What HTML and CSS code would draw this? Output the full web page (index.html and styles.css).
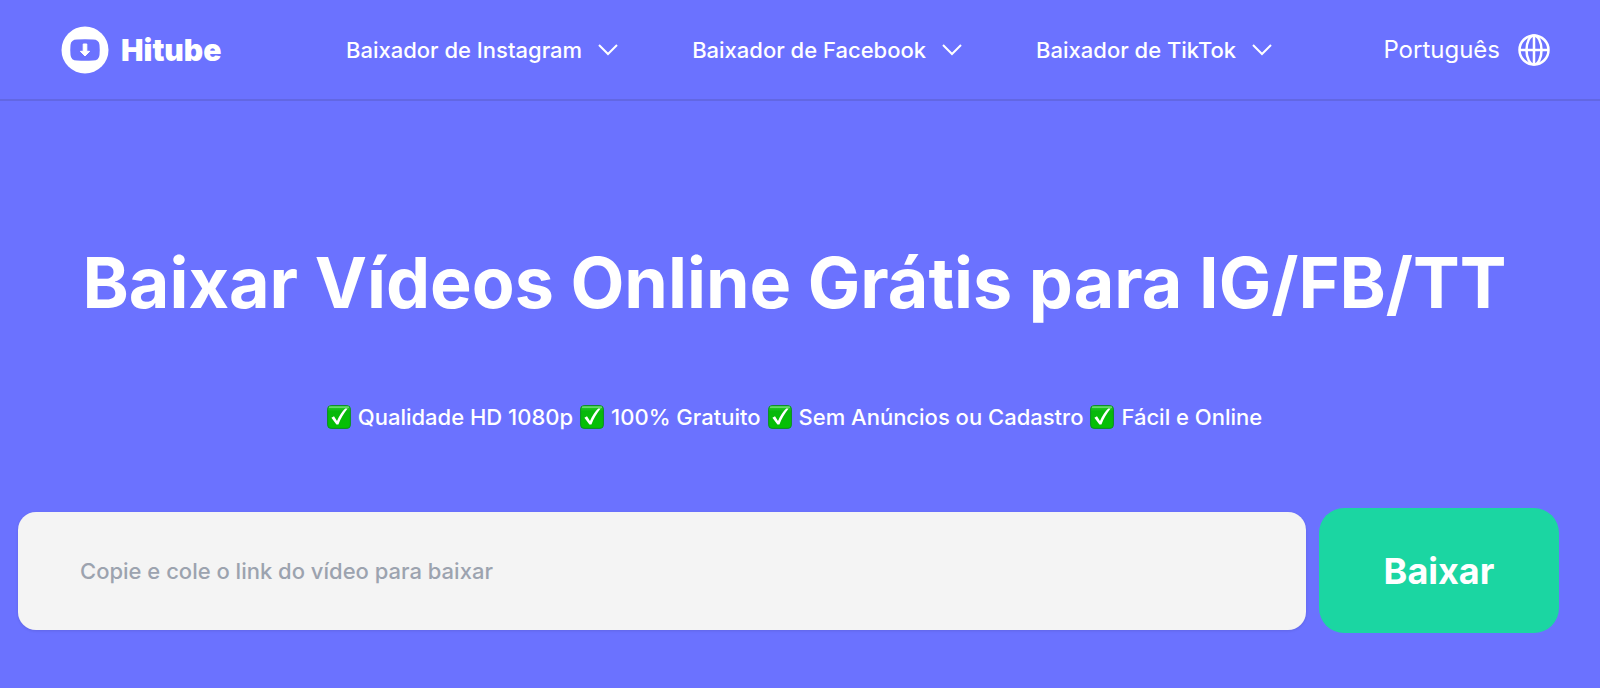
FILE: index.html
```html
<!DOCTYPE html>
<html lang="pt">
<head>
    <meta charset="UTF-8">
    <meta name="viewport" content="width=device-width, initial-scale=1.0">
    <title>Hitube</title>
    <link rel="stylesheet" href="styles.css">
</head>
<body>
    <svg width="0" height="0" class="sprite" aria-hidden="true">
        <linearGradient id="green" x1="0" y1="0" x2="0" y2="1">
            <stop offset="0" stop-color="#2fce35"/>
            <stop offset="0.25" stop-color="#08b80c"/>
            <stop offset="1" stop-color="#04c204"/>
        </linearGradient>
        <symbol id="check" viewBox="0 0 24 24">
            <rect x="0.6" y="0.6" width="22.8" height="22.8" rx="3.5" fill="url(#green)" stroke="#0a8f22" stroke-width="1"/>
            <path d="M2.5 2.2h19" stroke="#7be07f" stroke-width="1.2" stroke-linecap="round"/>
            <path d="M4.4 12.8l2.6-1.500 3 4.600c2.200-5 5-9 8.200-12.300h2.400c-3.800 4.700-6.800 9.900-9.200 16h-2z" fill="#fff"/>
        </symbol>
        <symbol id="chevron" viewBox="0 0 20 12">
            <path d="M1 1l9 9 9-9" fill="none" stroke="#fff" stroke-width="2"/>
        </symbol>
    </svg>
    <header class="header">
        <a class="logo" href="#">
            <svg width="48" height="48" viewBox="0 0 48 48" aria-hidden="true">
                <circle cx="24" cy="24" r="23.500" fill="#fff"/>
                <path d="M16 13.500Q24 13 32 13.500Q38 13.500 38.500 19Q39 24 38.500 29Q38 34.500 32 34.500Q24 35 16 34.500Q10 34.500 9.500 29Q9 24 9.500 19Q10 13.500 16 13.500z" fill="#6b72ff"/>
                <path d="M22.200 18h3.600v7.300h2.800L24 30 19.400 25.300h2.800z" fill="#fff" stroke="#fff" stroke-linejoin="round"/>
            </svg>
            <span>Hitube</span>
        </a>
        <nav class="nav">
            <a href="#">Baixador de Instagram <svg width="20" height="12"><use href="#chevron"/></svg></a>
            <a href="#">Baixador de Facebook <svg width="20" height="12"><use href="#chevron"/></svg></a>
            <a href="#">Baixador de TikTok <svg width="20" height="12"><use href="#chevron"/></svg></a>
        </nav>
        <button class="language" type="button">
            Português
            <svg width="32" height="32" viewBox="0 0 32 32" fill="none" stroke="#fff" stroke-width="2.500" aria-hidden="true">
                <circle cx="16" cy="16" r="14.500"/>
                <ellipse cx="16" cy="16" rx="7.500" ry="14.500"/>
                <path d="M16 1v30M1 16h30"/>
            </svg>
        </button>
    </header>
    <main class="hero">
        <h1>Baixar Vídeos Online Grátis para IG/FB/TT</h1>
        <p class="features">
            <span><svg width="24" height="24"><use href="#check"/></svg>Qualidade HD 1080p</span>
            <span><svg width="24" height="24"><use href="#check"/></svg>100% Gratuito</span>
            <span><svg width="24" height="24"><use href="#check"/></svg>Sem Anúncios ou Cadastro</span>
            <span><svg width="24" height="24"><use href="#check"/></svg>Fácil e Online</span>
        </p>
        <form class="download">
            <input type="text" aria-label="Link do vídeo" placeholder="Copie e cole o link do vídeo para baixar">
            <button type="button">Baixar</button>
        </form>
    </main>
</body>
</html>
```
FILE: styles.css
```css
* {
    box-sizing: border-box;
}
body {
    margin: 0;
    min-height: 100vh;
    background-color: #6b72ff;
    color: #fff;
    font-family: Inter, "Liberation Sans", sans-serif;
    font-size: 22px;
    font-weight: 500;
}
a {
    color: inherit;
    text-decoration: none;
}
button {
    border: none;
    color: inherit;
    font-family: inherit;
    cursor: pointer;
}
.sprite {
    display: block;
}
.header {
    display: flex;
    align-items: center;
    height: 101px;
    padding: 0 50px 0 61px;
    border-bottom: 2px solid #6267e3;
}
.logo {
    display: flex;
    align-items: center;
    gap: 12px;
    width: 165px;
    font-size: 30px;
    font-weight: 900;
}
.nav {
    display: flex;
    gap: 74px;
    margin-left: 120px;
}
.nav a {
    display: flex;
    align-items: center;
    gap: 16px;
    white-space: nowrap;
}
.language {
    display: flex;
    align-items: center;
    gap: 18px;
    margin-left: auto;
    padding: 0;
    background: none;
    font-size: 24px;
}
.hero {
    padding: 132px 41px 0 18px;
}
h1 {
    margin: 0;
    padding-left: 12px;
    font-size: 70px;
    font-weight: 700;
    line-height: 100px;
    text-align: center;
    white-space: nowrap;
}
.features {
    display: flex;
    justify-content: center;
    gap: 7px;
    margin: 68px 0 0;
    padding-left: 12px;
    line-height: 32px;
    white-space: nowrap;
}
.features span {
    display: flex;
    align-items: center;
    gap: 7px;
}
.download {
    display: flex;
    align-items: center;
    gap: 13px;
    margin-top: 75px;
}
.download input {
    flex: 1;
    height: 118px;
    padding: 0 62px;
    border: none;
    border-radius: 18px;
    background-color: #f4f4f4;
    box-shadow: 0 1px 3px rgba(0, 0, 0, 0.1);
    font-family: inherit;
    font-size: 22px;
    font-weight: 500;
}
.download input::placeholder {
    color: #9ca3af;
}
.download button {
    width: 240px;
    height: 125px;
    border-radius: 25px;
    background-color: #1bd6a2;
    font-size: 36px;
    font-weight: 700;
}
```
